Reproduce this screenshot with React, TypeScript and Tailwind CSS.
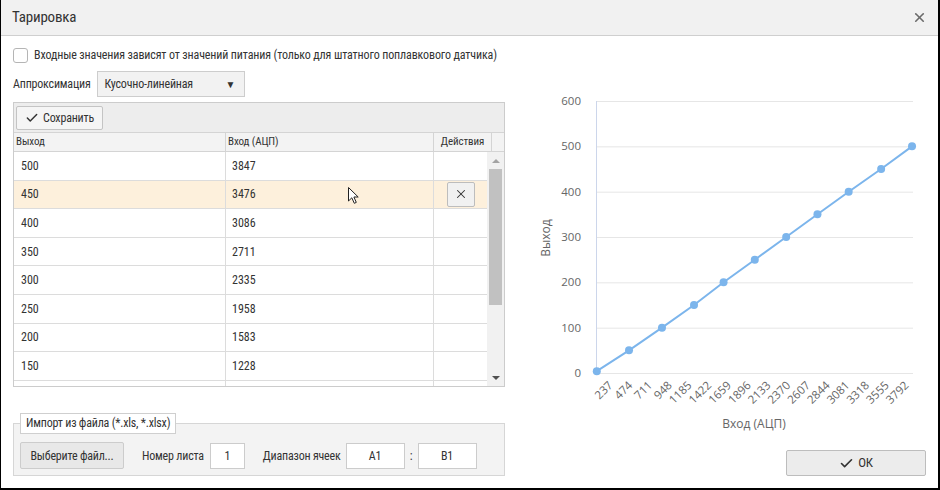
import React from "react"
import { Check, X } from "lucide-react"

const rows: [number, number][] = [
  [500, 3847],
  [450, 3476],
  [400, 3086],
  [350, 2711],
  [300, 2335],
  [250, 1958],
  [200, 1583],
  [150, 1228],
]

const points: [number, number][] = [
  [60, 4],
  [447, 50],
  [843, 100],
  [1228, 150],
  [1583, 200],
  [1958, 250],
  [2335, 300],
  [2711, 350],
  [3086, 400],
  [3476, 450],
  [3847, 500],
]

const px = (adc: number) => 65.8 + adc * 0.08324
const py = (out: number) => 283 - out * 0.4533

const Chart: React.FC = () => {
  const ticks = Array.from({ length: 16 }, (_, i) => 237 * (i + 1))
  const yTicks = [0, 100, 200, 300, 400, 500, 600]
  const line = points.map(([a, o]) => `${px(a).toFixed(1)},${py(o).toFixed(1)}`).join(" ")
  return (
    <svg
      width="400"
      height="350"
      viewBox="0 0 400 350"
      className="font-stretch-normal"
      style={{ fontFamily: "'Open Sans', sans-serif" }}
    >
      {yTicks.map((t) => (
        <g key={t}>
          {t > 0 && <line x1="71" x2="387" y1={py(t) + 0.5} y2={py(t) + 0.5} stroke="#e6e6e6" />}
          <text x="55" y={py(t) + 4} textAnchor="end" fontSize="11.5" fill="#666">{t}</text>
        </g>
      ))}
      <line x1="71" x2="387" y1="283.5" y2="283.5" stroke="#e6e6e6" />
      <line x1="70.5" x2="70.5" y1="11" y2="283" stroke="#ccd6eb" />
      {ticks.map((t) => (
        <text
          key={t}
          x={px(t) + 2}
          y="296"
          textAnchor="end"
          fontSize="11.5"
          fill="#666"
          transform={`rotate(-45 ${px(t) + 2} 296)`}
        >
          {t}
        </text>
      ))}
      <polyline points={line} fill="none" stroke="#7cb5ec" strokeWidth="2" />
      {points.map(([a, o], i) => (
        <circle key={i} cx={px(a)} cy={py(o)} r="4" fill="#7cb5ec" />
      ))}
      <text x="228" y="338" textAnchor="middle" fontSize="12" fill="#666">Вход (АЦП)</text>
      <text x="24" y="148" textAnchor="middle" fontSize="12" fill="#666" transform="rotate(-90 24 148)">Выход</text>
    </svg>
  )
}

const App: React.FC = () => {
  return (
    <div
      className="w-[940px] h-[490px] bg-white border-l border-r-2 border-b-2 border-black flex flex-col text-[#333] overflow-hidden font-stretch-[85%]"
      style={{ fontFamily: "Roboto, 'Liberation Sans', sans-serif" }}
    >
      <div className="h-[36px] shrink-0 bg-[#f1f1f1] border-b border-[#cfcfcf] flex items-center justify-between pl-[11px] pr-[11px]">
        <span className="text-[15px] tracking-[-0.2px] text-[#333]">Тарировка</span>
        <X size={15} strokeWidth={2.6} className="text-[#6b6b6b]" />
      </div>

      <div className="flex-1 flex px-[12px] pb-[12px]">
        <div className="w-[496px] flex flex-col">
          <div className="mt-[11px] h-[16px] flex items-center whitespace-nowrap">
            <span className="w-[15px] h-[15px] shrink-0 rounded-[3px] border border-[#b5b5b5] bg-white" />
            <span className="ml-[6px] text-[12px] tracking-[-0.13px]">
              Входные значения зависят от значений питания (только для штатного поплавкового датчика)
            </span>
          </div>

          <div className="mt-[8px] flex items-center">
            <span className="text-[12px] tracking-[-0.2px]">Аппроксимация</span>
            <div className="ml-[6px] w-[148px] h-[26px] bg-[#f2f2f2] border border-[#cdcdcd] flex items-center justify-between pl-[7px] pr-[8px]">
              <span className="text-[12px] tracking-[-0.2px]">Кусочно-линейная</span>
              <span className="text-[10px] text-[#333]">▼</span>
            </div>
          </div>

          <div className="mt-[5px] h-[285px] border border-[#cccccc] flex flex-col">
            <div className="h-[30px] shrink-0 bg-[#ededed] border-b border-[#d4d4d4] flex items-center pl-[2px]">
              <button className="h-[24px] w-[87px] bg-[#f5f5f5] border border-[#c4c4c4] rounded-[2px] flex items-center justify-center gap-[4px] text-[12px] tracking-[-0.2px]">
                <Check size={14} strokeWidth={2.5} />
                Сохранить
              </button>
            </div>
            <div className="h-[19px] shrink-0 bg-[#f3f3f3] border-b border-[#d4d4d4] flex text-[11px] tracking-[-0.1px]">
              <div className="w-[212px] border-r border-[#d4d4d4] pl-[2px] flex items-center">Выход</div>
              <div className="w-[208px] border-r border-[#d4d4d4] pl-[2px] flex items-center">Вход (АЦП)</div>
              <div className="w-[58px] border-r border-[#d4d4d4] flex items-center justify-center">Действия</div>
              <div className="flex-1" />
            </div>
            <div className="flex-1 flex overflow-hidden">
              <div className="flex-1 overflow-hidden">
                {rows.map(([out, adc]) => (
                  <div
                    key={out}
                    className={`h-[28.6px] flex border-b border-[#dcdcdc] text-[12px] ${out === 450 ? "bg-[#fdf0dc]" : "bg-white"}`}
                  >
                    <div className="w-[212px] border-r border-[#dcdcdc] pl-[7px] flex items-center">{out}</div>
                    <div className="w-[208px] border-r border-[#dcdcdc] pl-[6px] flex items-center relative">
                      {adc}
                      {out === 450 && (
                        <svg className="absolute left-[121px] top-[5px]" width="13" height="19" viewBox="0 0 13 19">
                          <path d="M1.5 1.5 L1.5 15 L4.8 11.8 L7.3 17.3 L9.3 16.4 L6.9 11 L11.2 11 Z" fill="white" stroke="#222" strokeWidth="1" strokeLinejoin="round" />
                        </svg>
                      )}
                    </div>
                    <div className="flex-1 flex items-center justify-center">
                      {out === 450 && (
                        <button className="w-[28px] h-[25px] bg-[#f1f1f1] border border-[#bdbdbd] rounded-[2px] flex items-center justify-center">
                          <X size={14} strokeWidth={1.8} className="text-[#333]" />
                        </button>
                      )}
                    </div>
                  </div>
                ))}
                <div className="h-[28.6px] flex bg-white">
                  <div className="w-[212px] border-r border-[#dcdcdc]" />
                  <div className="w-[208px] border-r border-[#dcdcdc]" />
                  <div className="flex-1" />
                </div>
              </div>
              <div className="w-[17px] shrink-0 bg-[#f1f1f1] flex flex-col items-center">
                <div className="h-[17px] flex items-center justify-center">
                  <span className="w-0 h-0 border-l-[4px] border-r-[4px] border-b-[4px] border-l-transparent border-r-transparent border-b-[#a3a3a3]" />
                </div>
                <div className="w-[13px] h-[136px] bg-[#c1c1c1]" />
                <div className="flex-1" />
                <div className="h-[17px] flex items-center justify-center">
                  <span className="w-0 h-0 border-l-[4px] border-r-[4px] border-t-[4px] border-l-transparent border-r-transparent border-t-[#505050]" />
                </div>
              </div>
            </div>
          </div>

          <fieldset className="mt-[26px] bg-[#f3f3f3] border border-[#d6d6d6] pl-[6px] pt-[8px] pb-[6px]">
            <legend className="bg-white border border-[#cfcfcf] h-[21px] px-[5px] text-[12px] tracking-[-0.2px] leading-[19px]">
              Импорт из файла (*.xls, *.xlsx)
            </legend>
            <div className="flex items-center text-[12px] tracking-[-0.2px]">
              <button className="w-[104px] h-[27px] bg-[#e8e8e8] border border-[#cccccc] rounded-[2px] text-[12px]">Выберите файл...</button>
              <span className="ml-[18px]">Номер листа</span>
              <div className="ml-[6px] w-[35px] h-[26px] bg-white border border-[#cccccc] flex items-center justify-center">1</div>
              <span className="ml-[18px]">Диапазон ячеек</span>
              <div className="ml-[5px] w-[59px] h-[26px] bg-white border border-[#cccccc] flex items-center justify-center">A1</div>
              <span className="w-[13px] text-center">:</span>
              <div className="w-[59px] h-[26px] bg-white border border-[#cccccc] flex items-center justify-center">B1</div>
            </div>
          </fieldset>
        </div>

        <div className="flex-1 flex flex-col">
          <div className="ml-[21px] mt-[54px]">
            <Chart />
          </div>
          <button className="mt-auto self-end w-[140px] h-[26px] bg-[#ececec] border border-[#bdbdbd] rounded-[2px] flex items-center justify-center gap-[4px] text-[13px] tracking-[-0.2px]">
            <Check size={15} strokeWidth={2.6} />
            ОК
          </button>
        </div>
      </div>
    </div>
  )
}

export default App
